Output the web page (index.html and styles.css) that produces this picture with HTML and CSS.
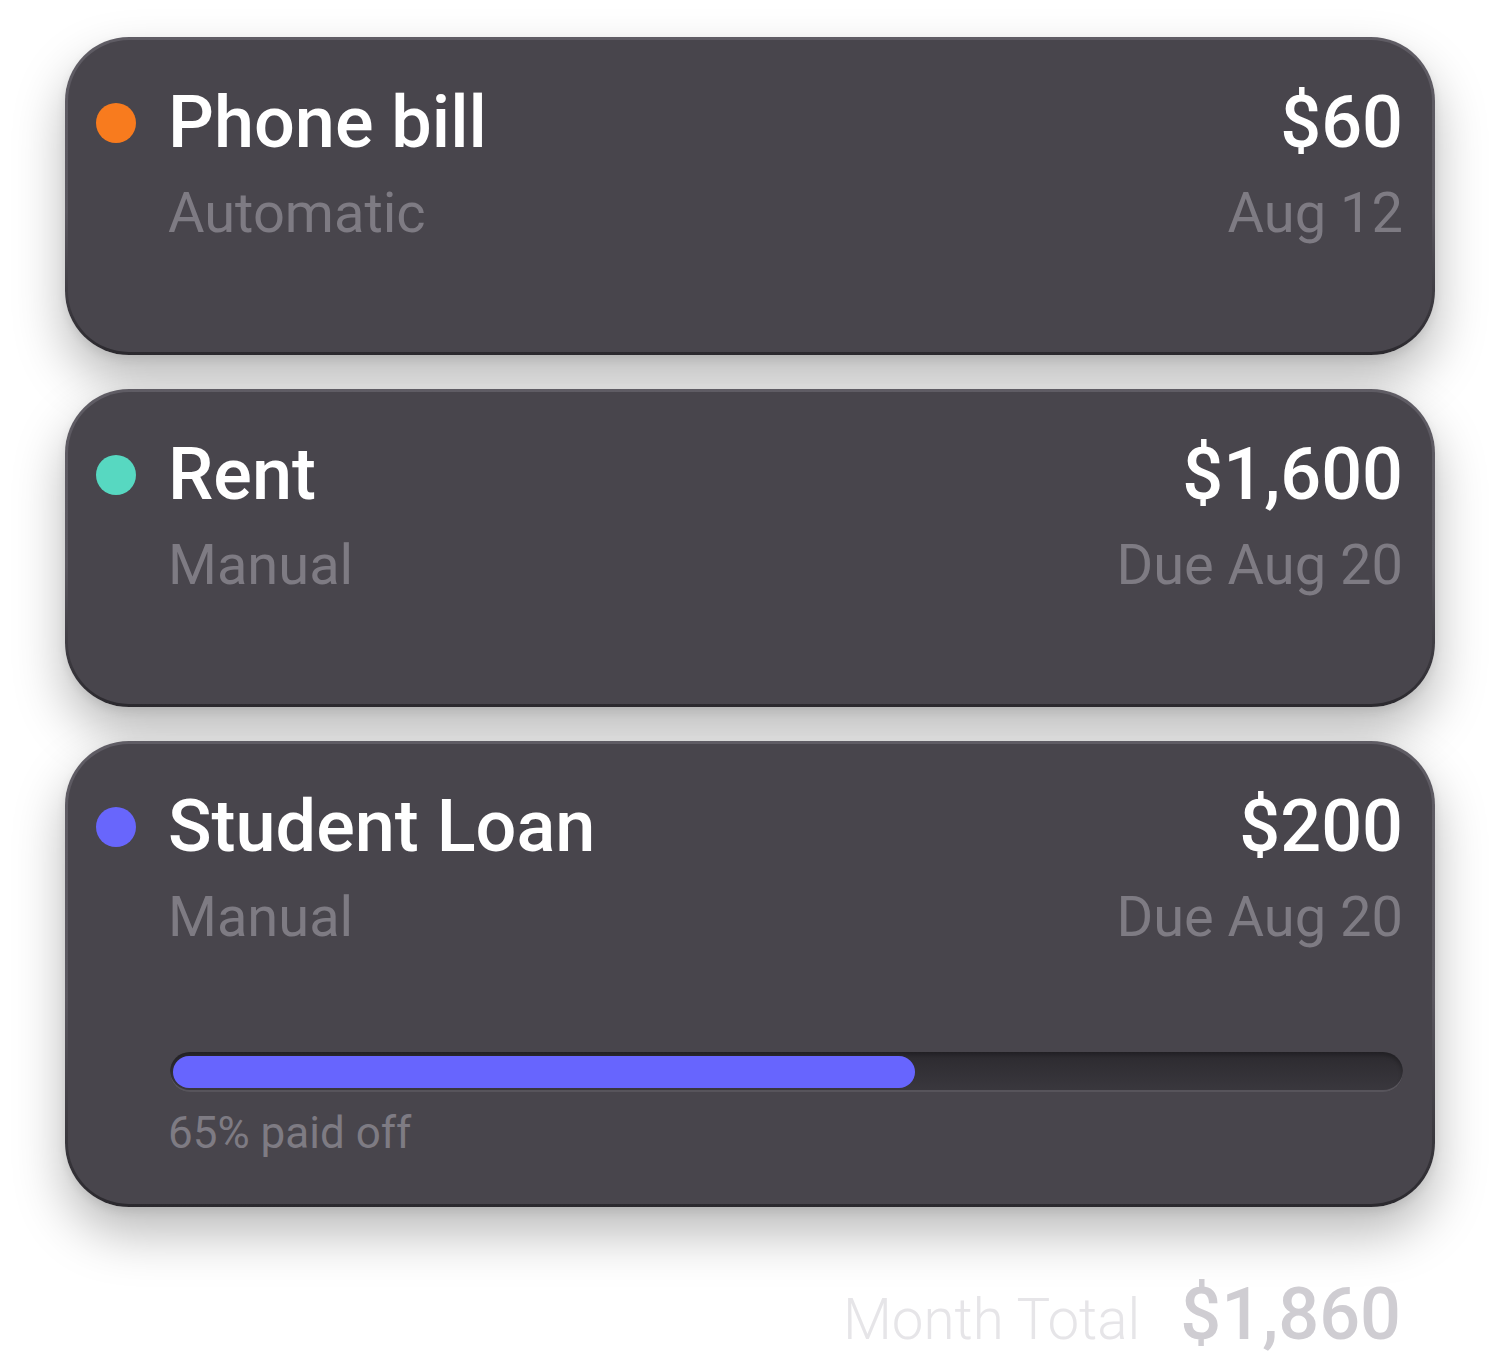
FILE: index.html
```html
<!DOCTYPE html>
<html lang="en">
<head>
<meta charset="utf-8">
<title>Bills</title>
<link rel="stylesheet" href="styles.css">
</head>
<body>
<main class="bills">
  <section class="card">
    <span class="dot dot-orange"></span>
    <h2 class="title">Phone bill</h2>
    <div class="amount">$60</div>
    <div class="sub">Automatic</div>
    <div class="due">Aug 12</div>
  </section>
  <section class="card">
    <span class="dot dot-teal"></span>
    <h2 class="title">Rent</h2>
    <div class="amount">$1,600</div>
    <div class="sub">Manual</div>
    <div class="due">Due Aug 20</div>
  </section>
  <section class="card">
    <span class="dot dot-purple"></span>
    <h2 class="title">Student Loan</h2>
    <div class="amount">$200</div>
    <div class="sub">Manual</div>
    <div class="due">Due Aug 20</div>
    <div class="progress">
      <div class="track"><div class="fill" style="width: 60.5%"></div></div>
      <div class="progress-label">65% paid off</div>
    </div>
  </section>
  <footer class="total">
    <span class="total-label">Month Total</span>
    <span class="total-amount">$1,860</span>
  </footer>
</main>
</body>
</html>
```

FILE: styles.css
```css
* { box-sizing: border-box; }

html, body {
  margin: 0;
  background: #ffffff;
}

body {
  font-family: Roboto, "Liberation Sans", sans-serif;
  padding: 37px 65px 0;
}

.bills {
  display: flex;
  flex-direction: column;
  gap: 34px;
}

.card {
  display: grid;
  grid-template-columns: 40px 1fr auto;
  column-gap: 32px;
  align-items: center;
  align-content: start;
  min-height: 318px;
  padding: 41px 29px 45px 28px;
  border: 3px solid transparent;
  border-radius: 64px;
  background:
    linear-gradient(#48454c, #48454c) padding-box,
    linear-gradient(to bottom, #5f5c64 0%, #5a575f 55%, #2b292e 100%) border-box;
  box-shadow: 0 26px 52px rgba(0, 0, 0, 0.28), 0 4px 10px rgba(0, 0, 0, 0.08);
}

.dot {
  grid-column: 1;
  grid-row: 1;
  width: 40px;
  height: 40px;
  border-radius: 50%;
}
.dot-orange { background: #f87b1e; }
.dot-teal { background: #57d8c1; }
.dot-purple { background: #6866fc; }

.title {
  grid-column: 2;
  grid-row: 1;
  margin: 0;
  font-size: 72px;
  line-height: 84px;
  font-weight: 500;
  color: #ffffff;
}

.amount {
  grid-column: 3;
  grid-row: 1;
  text-align: right;
  font-size: 72px;
  line-height: 84px;
  font-weight: 500;
  color: #ffffff;
}

.sub, .due {
  grid-row: 2;
  margin-top: 15px;
  font-size: 56px;
  line-height: 66px;
  font-weight: 400;
  color: #7e7b83;
}
.sub { grid-column: 2; }
.due { grid-column: 3; text-align: right; }

.progress {
  grid-column: 2 / 4;
  grid-row: 3;
  margin-top: 102px;
  margin-left: 2px;
}

.track {
  height: 40px;
  padding: 4px 4px 4px 3px;
  border-radius: 20px;
  background: linear-gradient(to bottom, #2c2a2f, #3a383e);
  box-shadow: inset 0 -2px 0 #57545b, inset 0 3px 4px rgba(0, 0, 0, 0.25);
}

.fill {
  height: 32px;
  border-radius: 16px;
  background: #6765fe;
}

.progress-label {
  margin-top: 15px;
  margin-left: -2px;
  font-size: 44px;
  line-height: 52px;
  color: #7e7b83;
}

.total {
  display: flex;
  justify-content: flex-end;
  align-items: baseline;
  gap: 40px;
  margin-top: 32px;
  padding-right: 34px;
}

.total-label {
  font-size: 56.5px;
  line-height: 84px;
  font-weight: 300;
  color: #e6e5e8;
}

.total-amount {
  font-size: 72px;
  line-height: 84px;
  font-weight: 500;
  color: #cfcdd2;
}
```
